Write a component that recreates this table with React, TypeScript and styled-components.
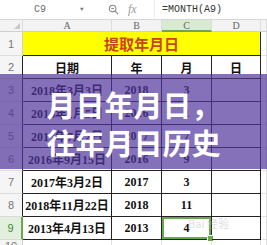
import styled, {createGlobalStyle, css} from "styled-components";

const GlobalStyle = createGlobalStyle`
    html, body {
        margin: 0;
        padding: 0;
        background: #ffffff;
    }
    body {
        width: 267px;
        height: 245px;
        overflow: hidden;
        font-family: "Liberation Serif", "Noto Sans CJK SC", serif;
    }
`;

const Page = styled.div`
    position: relative;
    width: 267px;
    height: 245px;
    overflow: hidden;
    background: #ffffff;
`;

const FormulaBar = styled.div`
    display: flex;
    align-items: center;
    height: 19px;
    border-bottom: 1px solid #d6d6d6;
    font-family: "Liberation Mono", "Noto Sans CJK SC", monospace;
    font-size: 10px;
    color: #555;
`;

const NameBox = styled.div`
    width: 98px;
    display: flex;
    align-items: center;
    padding-left: 34px;
    box-sizing: border-box;
    gap: 34px;
    color: #6b6b6b;
`;

const Arrow = styled.span`
    font-size: 6px;
    color: #777;
`;

const Tools = styled.div`
    display: flex;
    align-items: center;
    gap: 9px;
    padding-left: 10px;
    width: 56px;
    box-sizing: border-box;
    color: #8a8a8a;
`;

const Fx = styled.span`
    font-family: "Liberation Serif", serif;
    font-style: italic;
    font-size: 12px;
    color: #9a9a9a;
`;

const Formula = styled.div`
    flex: 1;
    height: 100%;
    display: flex;
    align-items: center;
    padding-left: 7px;
    border-left: 1px solid #ececec;
    color: #333;
`;

const Sheet = styled.div`
    display: grid;
    grid-template-columns: 23px 89px 50px 50px 49px 1fr;
    grid-template-rows: 12px 24px repeat(8, 23px) 1fr;
    height: 225px;
`;

const Head = styled.div<{ $active?: boolean }>`
    display: flex;
    align-items: center;
    justify-content: center;
    box-sizing: border-box;
    background: ${({$active}) => ($active ? "#d9ead3" : "#f3f3f3")};
    border-right: 1px solid #dcdcdc;
    border-bottom: ${({$active}) => ($active ? "2px solid #6aa84f" : "1px solid #d0d0d0")};
    font-size: 10px;
    color: #666;
`;

const Corner = styled(Head)`
    position: relative;
    &::after {
        content: "";
        position: absolute;
        right: 2px;
        bottom: 2px;
        border-left: 6px solid transparent;
        border-bottom: 6px solid #c8c8c8;
    }
`;

const RowNum = styled.div<{ $active?: boolean; $table?: boolean }>`
    display: flex;
    align-items: center;
    justify-content: center;
    box-sizing: border-box;
    background: ${({$active}) => ($active ? "#e2efdc" : "#f5f5f5")};
    border-bottom: 1px solid #dcdcdc;
    border-right: ${({$active, $table}) =>
        $active ? "2px solid #6aa84f" : $table ? "1px solid #222" : "1px solid #d0d0d0"};
    font-size: 11px;
    color: ${({$active}) => ($active ? "#3d8a2a" : "#777")};
    font-family: "Liberation Sans", sans-serif;
`;

const Title = styled.div`
    grid-column: span 4;
    display: flex;
    align-items: center;
    justify-content: center;
    box-sizing: border-box;
    background: #ffff00;
    border-right: 1px solid #222;
    border-bottom: 1px solid #222;
    font-family: "Noto Sans CJK SC", sans-serif;
    font-weight: 700;
    font-size: 15px;
    color: #c8421c;
`;

const Cell = styled.div<{ $header?: boolean; $selected?: boolean }>`
    position: relative;
    display: flex;
    align-items: center;
    justify-content: center;
    box-sizing: border-box;
    border-right: 1px solid #222;
    border-bottom: 1px solid #222;
    font-weight: 700;
    font-size: 12px;
    color: #111;
    font-family: "Liberation Serif", "Noto Sans CJK SC", serif;
    ${({$header}) =>
        $header &&
        css`
            font-family: "Noto Sans CJK SC", sans-serif;
            font-size: 12px;
        `}
    ${({$selected}) =>
        $selected &&
        css`
            box-shadow: inset 0 0 0 2px #6aa84f;
            &::after {
                content: "";
                position: absolute;
                right: -3px;
                bottom: -3px;
                width: 5px;
                height: 5px;
                background: #6aa84f;
                border: 1px solid #fff;
            }
        `}
`;

const Blank = styled.div`
    box-sizing: border-box;
    border-right: 1px solid #e0e0e0;
    border-bottom: 1px solid #e0e0e0;
`;

const Banner = styled.div`
    position: absolute;
    left: 0;
    right: 0;
    top: 74px;
    height: 95px;
    background: rgba(80, 52, 156, 0.7);
    display: flex;
    flex-direction: column;
    align-items: center;
    justify-content: center;
    gap: 2px;
    padding-top: 2px;
    box-sizing: border-box;
    color: #ffffff;
    font-family: "Noto Sans CJK SC", sans-serif;
    font-weight: 700;
    font-size: 29px;
    line-height: 36px;
    text-align: center;
`;

const Watermark = styled.div`
    position: absolute;
    left: 188px;
    top: 215px;
    font-family: "Noto Sans CJK SC", sans-serif;
    font-size: 11px;
    color: rgba(200, 200, 200, 0.6);
`;

const rows = [
    {date: "2018年3月3日", y: "2018", m: "3"},
    {date: "2016年1月5日", y: "2016", m: "1"},
    {date: "2017年7月2日", y: "2017", m: "7"},
    {date: "2016年9月15日", y: "2016", m: "9"},
    {date: "2017年3月2日", y: "2017", m: "3"},
    {date: "2018年11月22日", y: "2018", m: "11"},
    {date: "2013年4月13日", y: "2013", m: "4"},
];

export default function App() {
    return (
        <Page>
            <GlobalStyle/>
            <FormulaBar>
                <NameBox>
                    C9
                    <Arrow>▼</Arrow>
                </NameBox>
                <Tools>
                    <svg width="11" height="11" viewBox="0 0 12 12" fill="none" stroke="#8a8a8a" strokeWidth="1.2">
                        <circle cx="5" cy="5" r="3.6"/>
                        <line x1="7.6" y1="7.6" x2="11" y2="11"/>
                        <line x1="3.5" y1="5" x2="6.5" y2="5"/>
                    </svg>
                    <Fx>fx</Fx>
                </Tools>
                <Formula>=MONTH(A9)</Formula>
            </FormulaBar>
            <Sheet>
                <Corner/>
                <Head>A</Head>
                <Head>B</Head>
                <Head $active>C</Head>
                <Head>D</Head>
                <Head/>

                <RowNum>1</RowNum>
                <Title>提取年月日</Title>
                <Blank/>

                <RowNum $table>2</RowNum>
                <Cell $header>日期</Cell>
                <Cell $header>年</Cell>
                <Cell $header>月</Cell>
                <Cell $header>日</Cell>
                <Blank/>

                {rows.map((r, i) => (
                    <>
                        <RowNum key={`n${i}`} $table={i !== 6} $active={i === 6}>{i + 3}</RowNum>
                        <Cell key={`a${i}`}>{r.date}</Cell>
                        <Cell key={`b${i}`}>{r.y}</Cell>
                        <Cell key={`c${i}`} $selected={i === 6}>{r.m}</Cell>
                        <Cell key={`d${i}`}/>
                        <Blank key={`e${i}`}/>
                    </>
                ))}

                <RowNum>10</RowNum>
                <Blank/>
                <Blank/>
                <Blank/>
                <Blank/>
                <Blank/>
            </Sheet>
            <Watermark>Bai 经验</Watermark>
            <Banner>
                <div>月日年月日，</div>
                <div>往年月日历史</div>
            </Banner>
        </Page>
    );
}
